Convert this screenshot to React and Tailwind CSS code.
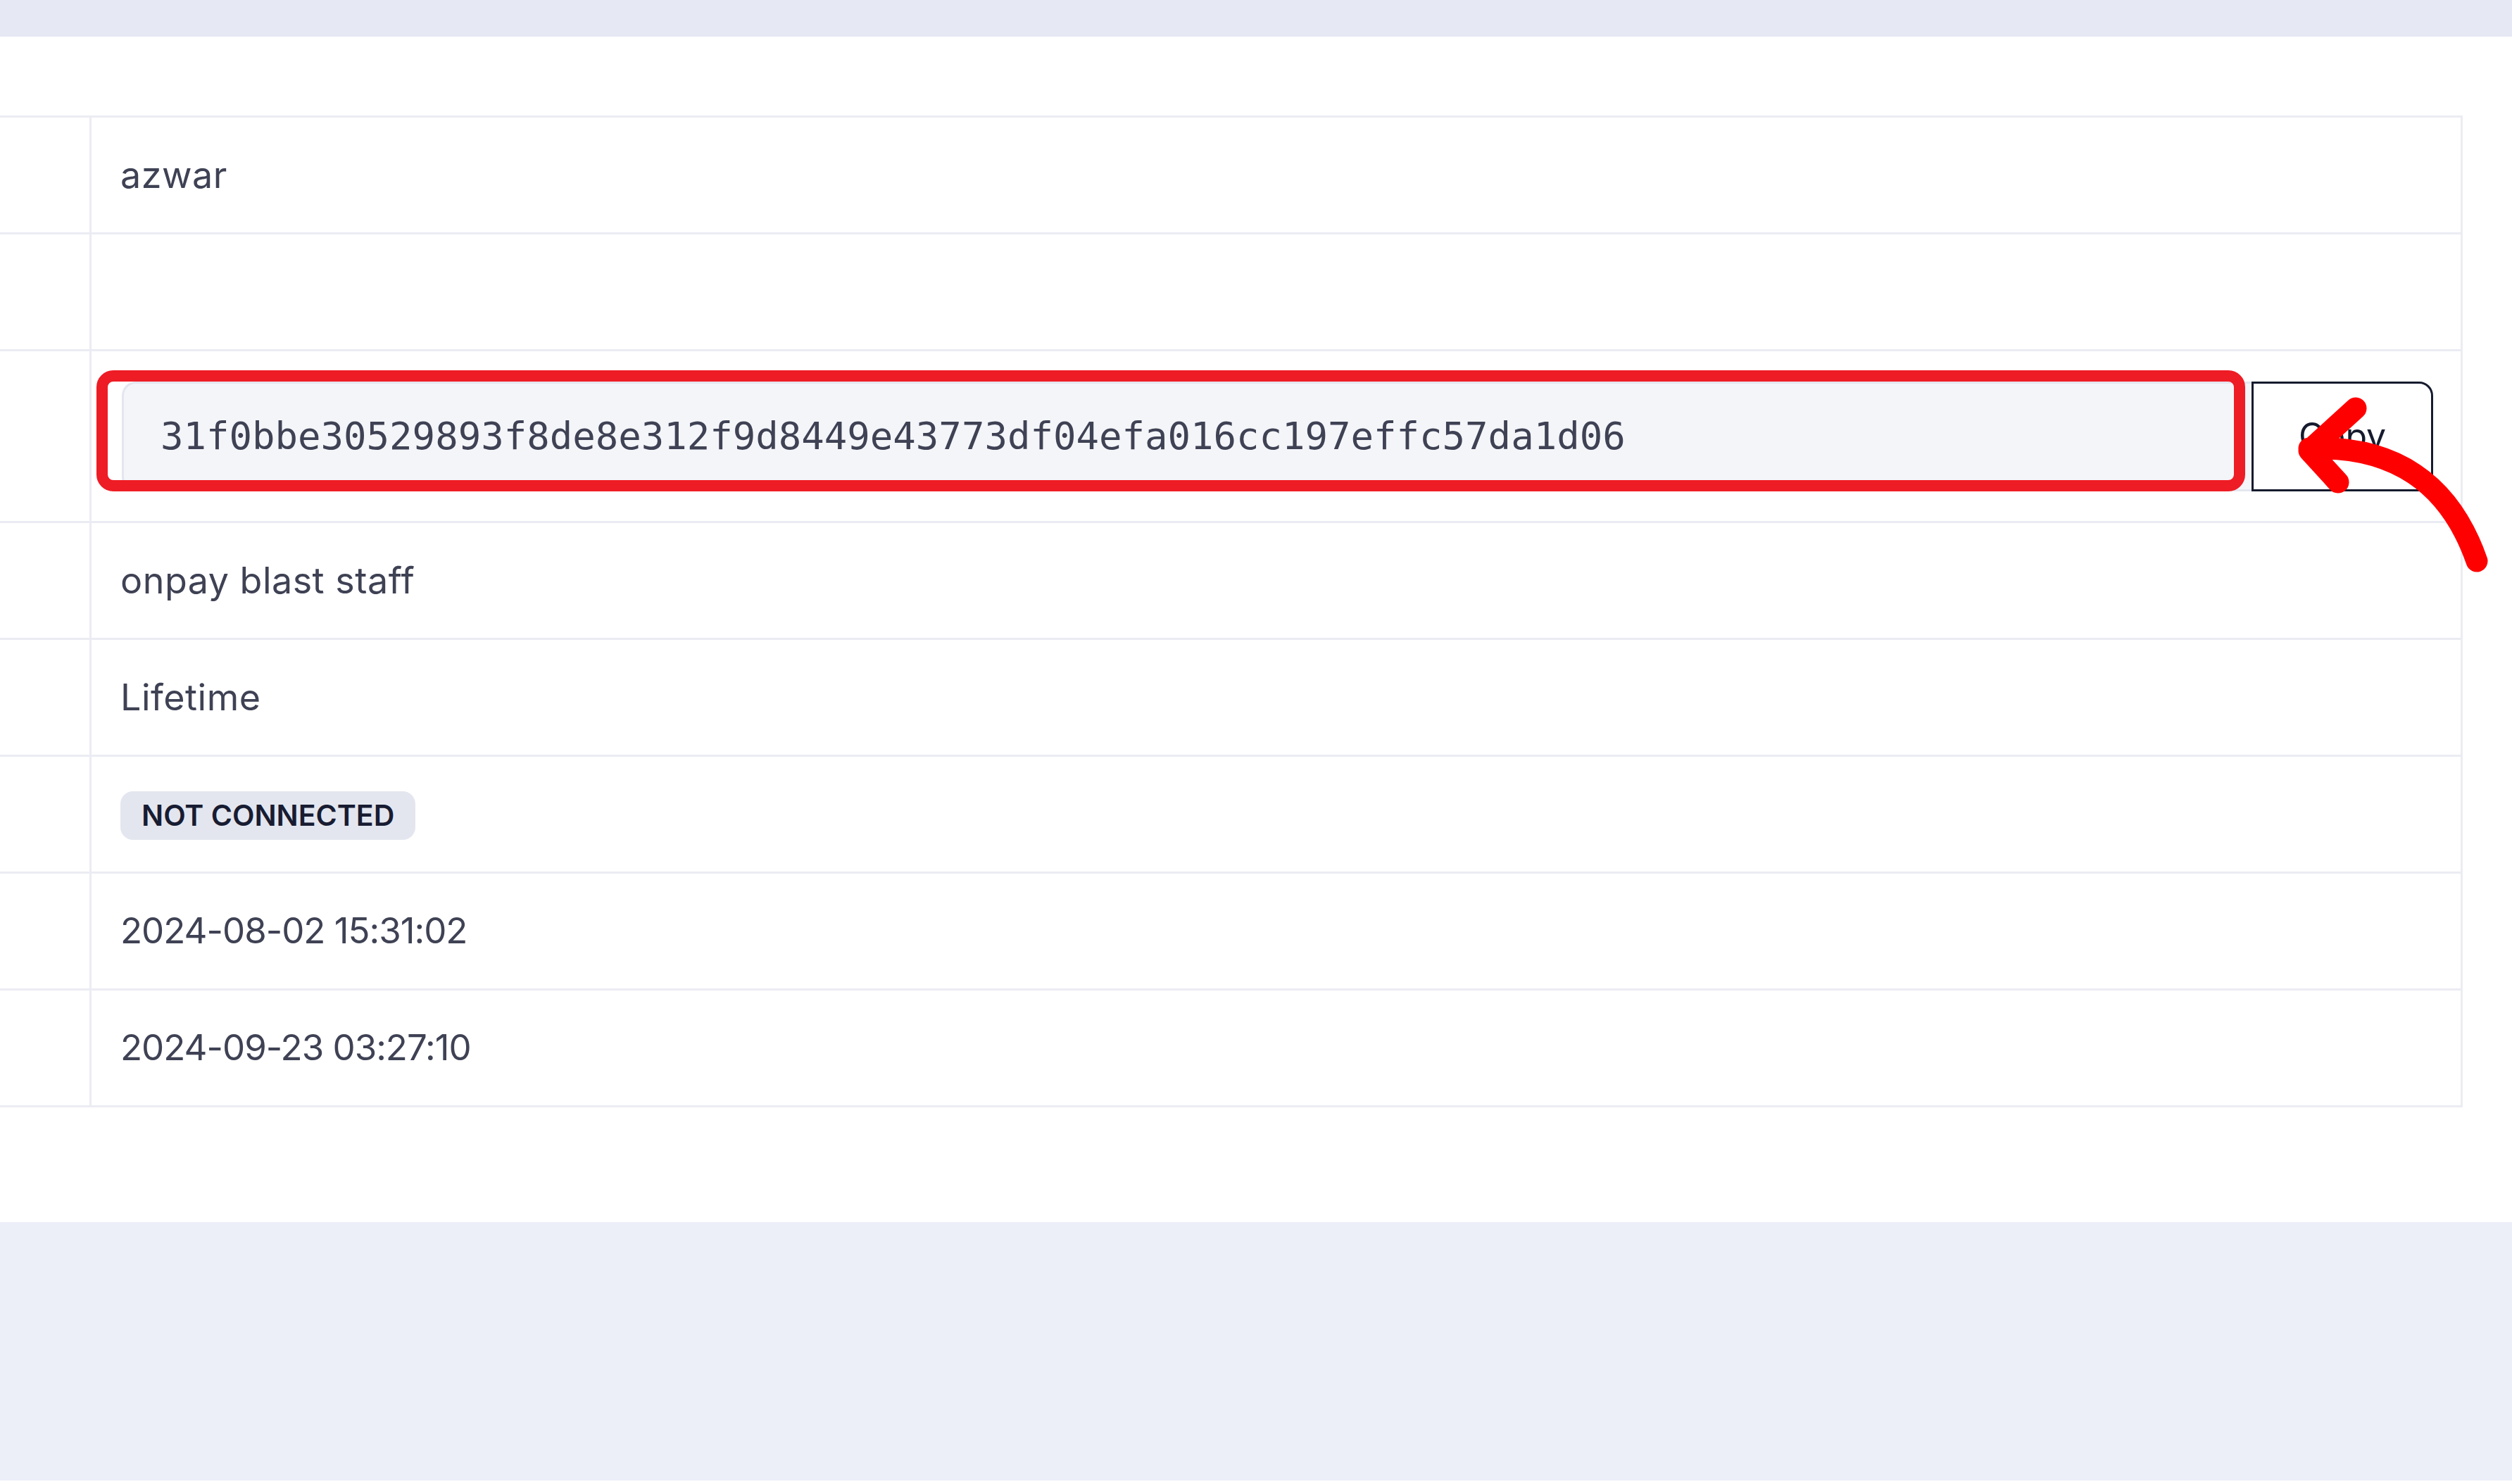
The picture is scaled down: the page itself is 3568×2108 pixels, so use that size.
import React from 'react'

const sans = { fontFamily: 'Inter, "Noto Sans", sans-serif' }

const rows = [
  { h: 'h-[166px]', value: 'azwar' },
  { h: 'h-[166px]', value: '' },
  { h: 'h-[244px]', key: true },
  { h: 'h-[166px]', value: 'onpay blast staff' },
  { h: 'h-[166px]', value: 'Lifetime' },
  { h: 'h-[166px]', badge: 'NOT CONNECTED' },
  { h: 'h-[166px]', value: '2024-08-02 15:31:02', date: true },
  { h: 'h-[166px]', value: '2024-09-23 03:27:10', date: true },
]

function KeyCell() {
  return (
    <div className="relative flex h-full items-center pl-[43px] pr-[39px]">
      <div className="flex h-[156px] flex-1 items-stretch">
        <div className="flex flex-1 items-center rounded-l-[20px] border-[3px] border-r-0 border-[#e4e6ef] bg-[#f4f5f9] pl-[52px]">
          <span
            className="text-[54px] text-[#3f4254]"
            style={{ fontFamily: '"DejaVu Sans Mono", monospace' }}
          >
            31f0bbe30529893f8de8e312f9d8449e43773df04efa016cc197effc57da1d06
          </span>
        </div>
        <button className="flex w-[258px] items-center justify-center rounded-r-[20px] border-[3px] border-[#161b2e] bg-white text-[50px] text-[#161b2e]">
          Copy
        </button>
      </div>
      {/* red highlight */}
      <div className="pointer-events-none absolute left-[7px] top-[27px] h-[172px] w-[3052px] rounded-[24px] border-[16px] border-[#ee1c25]" />
    </div>
  )
}

export default function App() {
  return (
    <div className="relative flex min-h-[2108px] w-full flex-col bg-white" style={sans}>
      <div className="h-[52px] bg-[#e6e8f3]" />
      <div className="flex h-[1684px] flex-col bg-white pt-[112px] pr-[70px]">
        <div className="border-t-[3px] border-r-[3px] border-[#ebecf3]">
          {rows.map((r, i) => (
            <div key={i} className={`flex border-b-[3px] border-[#ebecf3] ${r.h}`}>
              <div className="w-[130px] shrink-0 border-r-[3px] border-[#ebecf3]" />
              <div className="flex-1">
                {r.key ? (
                  <KeyCell />
                ) : (
                  <div className="flex h-full items-center pl-[41px]">
                    {r.badge ? (
                      <span className="mt-[4px] rounded-[18px] bg-[#e4e6ef] px-[30px] py-[12px] text-[41px] font-semibold leading-[45px] text-[#181c32]">
                        {r.badge}
                      </span>
                    ) : (
                      <span
                        className={
                          r.date
                            ? 'text-[51px] tracking-[-1px] text-[#3f4254]'
                            : 'text-[52px] tracking-[0.5px] text-[#3f4254]'
                        }
                      >
                        {r.value}
                      </span>
                    )}
                  </div>
                )}
              </div>
            </div>
          ))}
        </div>
      </div>
      <div className="h-[367px] bg-[#eceff8]" />
      <div className="h-[5px] bg-white" />

      {/* arrow annotation */}
      <svg
        className="pointer-events-none absolute left-0 top-0"
        width="3568"
        height="2108"
        viewBox="0 0 3568 2108"
        fill="none"
      >
        <path
          d="M3518 797 Q3460 630 3280 637 M3346 580 L3280 640 L3321 685"
          stroke="#ff0000"
          strokeWidth="31"
          strokeLinecap="round"
          strokeLinejoin="round"
        />
      </svg>
    </div>
  )
}
